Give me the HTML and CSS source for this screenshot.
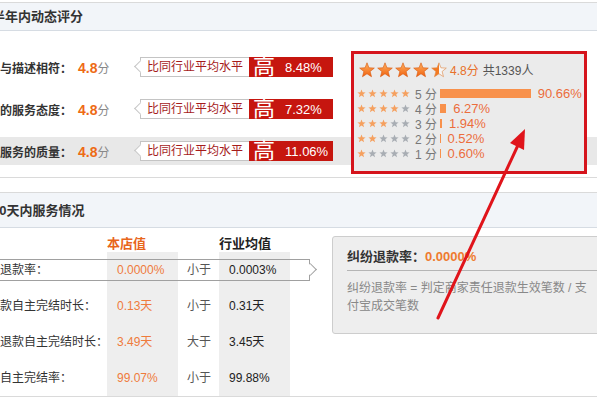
FILE: index.html
```html
<!DOCTYPE html>
<html lang="zh-CN">
<head>
    <meta charset="UTF-8">
    <title>店铺评分</title>
    <link rel="stylesheet" href="styles.css">
</head>
<body>
    <svg class="svg-defs" aria-hidden="true">
        <defs>
            <linearGradient id="g-star" x1="0" y1="0" x2="0" y2="1">
                <stop offset="0" stop-color="#ffb463"/>
                <stop offset="1" stop-color="#f0600e"/>
            </linearGradient>
            <linearGradient id="g-half" x1="0" y1="0" x2="1" y2="0">
                <stop offset="0.5" stop-color="#f37a22"/>
                <stop offset="0.5" stop-color="#f6f6f6"/>
            </linearGradient>
            <symbol id="star" viewBox="0 0 20 20">
                <polygon points="10,1 12.41,7.28 19.13,7.63 13.9,11.87 15.64,18.37 10,14.7 4.36,18.37 6.1,11.87 0.87,7.63 7.59,7.28"/>
            </symbol>
        </defs>
    </svg>

    <div class="page">
        <!-- 半年内动态评分 -->
        <div class="box">
            <div class="box-hd">半年内动态评分</div>
            <div class="dsr-bd">
                <div class="dsr-row">
                    <span class="dsr-name">宝贝与描述相符：</span>
                    <span class="dsr-score"><em>4.8</em>分</span>
                    <span class="compare">
                        <span class="compare-text">比同行业平均水平</span>
                        <span class="compare-val"><b>高</b>8.48%</span>
                    </span>
                </div>
                <div class="dsr-row">
                    <span class="dsr-name">卖家的服务态度：</span>
                    <span class="dsr-score"><em>4.8</em>分</span>
                    <span class="compare">
                        <span class="compare-text">比同行业平均水平</span>
                        <span class="compare-val"><b>高</b>7.32%</span>
                    </span>
                </div>
                <div class="dsr-row on">
                    <span class="dsr-name">物流服务的质量：</span>
                    <span class="dsr-score"><em>4.8</em>分</span>
                    <span class="compare">
                        <span class="compare-text">比同行业平均水平</span>
                        <span class="compare-val"><b>高</b>11.06%</span>
                    </span>
                </div>

                <div class="rate-panel">
                    <div class="rate-total">
                        <svg class="star-lg"><use href="#star"/></svg>
                        <svg class="star-lg"><use href="#star"/></svg>
                        <svg class="star-lg"><use href="#star"/></svg>
                        <svg class="star-lg"><use href="#star"/></svg>
                        <svg class="star-lg half"><use href="#star"/></svg>
                        <span class="rate-score">4.8分</span>
                        <span class="rate-count">共1339人</span>
                    </div>
                    <div class="rate-row">
                        <span class="stars-sm">
                            <svg class="star-sm"><use href="#star"/></svg><svg class="star-sm"><use href="#star"/></svg><svg class="star-sm"><use href="#star"/></svg><svg class="star-sm"><use href="#star"/></svg><svg class="star-sm"><use href="#star"/></svg>
                        </span>
                        <span class="rate-label">5 分</span>
                        <span class="rate-bar" style="width: 90.66px"></span>
                        <span class="rate-pct">90.66%</span>
                    </div>
                    <div class="rate-row">
                        <span class="stars-sm">
                            <svg class="star-sm"><use href="#star"/></svg><svg class="star-sm"><use href="#star"/></svg><svg class="star-sm"><use href="#star"/></svg><svg class="star-sm"><use href="#star"/></svg><svg class="star-sm off"><use href="#star"/></svg>
                        </span>
                        <span class="rate-label">4 分</span>
                        <span class="rate-bar" style="width: 6.27px"></span>
                        <span class="rate-pct">6.27%</span>
                    </div>
                    <div class="rate-row">
                        <span class="stars-sm">
                            <svg class="star-sm"><use href="#star"/></svg><svg class="star-sm"><use href="#star"/></svg><svg class="star-sm"><use href="#star"/></svg><svg class="star-sm off"><use href="#star"/></svg><svg class="star-sm off"><use href="#star"/></svg>
                        </span>
                        <span class="rate-label">3 分</span>
                        <span class="rate-bar" style="width: 1.94px"></span>
                        <span class="rate-pct">1.94%</span>
                    </div>
                    <div class="rate-row">
                        <span class="stars-sm">
                            <svg class="star-sm"><use href="#star"/></svg><svg class="star-sm"><use href="#star"/></svg><svg class="star-sm off"><use href="#star"/></svg><svg class="star-sm off"><use href="#star"/></svg><svg class="star-sm off"><use href="#star"/></svg>
                        </span>
                        <span class="rate-label">2 分</span>
                        <span class="rate-bar" style="width: 0.52px"></span>
                        <span class="rate-pct">0.52%</span>
                    </div>
                    <div class="rate-row">
                        <span class="stars-sm">
                            <svg class="star-sm"><use href="#star"/></svg><svg class="star-sm off"><use href="#star"/></svg><svg class="star-sm off"><use href="#star"/></svg><svg class="star-sm off"><use href="#star"/></svg><svg class="star-sm off"><use href="#star"/></svg>
                        </span>
                        <span class="rate-label">1 分</span>
                        <span class="rate-bar" style="width: 0.60px"></span>
                        <span class="rate-pct">0.60%</span>
                    </div>
                </div>
            </div>
        </div>

        <!-- 30天内服务情况 -->
        <div class="box box-service">
            <div class="box-hd">30天内服务情况</div>
            <div class="svc-bd">
                <div class="svc-table">
                    <div class="svc-head">
                        <span></span>
                        <span class="col-shop">本店值</span>
                        <span></span>
                        <span class="col-avg">行业均值</span>
                        <span></span>
                    </div>
                    <div class="svc-row active">
                        <span class="svc-name">纠纷退款率：</span>
                        <span class="svc-val shop">0.0000%</span>
                        <span class="svc-cmp">小于</span>
                        <span class="svc-val">0.0003%</span>
                        <span></span>
                    </div>
                    <div class="svc-row">
                        <span class="svc-name">仅退款自主完结时长：</span>
                        <span class="svc-val shop">0.13天</span>
                        <span class="svc-cmp">小于</span>
                        <span class="svc-val">0.31天</span>
                        <span></span>
                    </div>
                    <div class="svc-row">
                        <span class="svc-name">退货退款自主完结时长：</span>
                        <span class="svc-val shop">3.49天</span>
                        <span class="svc-cmp">大于</span>
                        <span class="svc-val">3.45天</span>
                        <span></span>
                    </div>
                    <div class="svc-row">
                        <span class="svc-name">退款自主完结率：</span>
                        <span class="svc-val shop">99.07%</span>
                        <span class="svc-cmp">小于</span>
                        <span class="svc-val">99.88%</span>
                        <span></span>
                    </div>
                </div>

                <div class="svc-tip">
                    <div class="tip-title">纠纷退款率：<em>0.0000%</em></div>
                    <div class="tip-desc">纠纷退款率 = 判定商家责任退款生效笔数 / 支付宝成交笔数</div>
                </div>
            </div>
        </div>
    </div>

    <!-- annotation arrow -->
    <svg class="mark-arrow" viewBox="0 0 597 397">
        <line x1="438" y1="318" x2="519" y2="143" stroke="#e0141b" stroke-width="3" stroke-linecap="round"/>
        <polygon points="525,129 524,150 510,143" fill="#e0141b"/>
    </svg>
</body>
</html>
```

FILE: styles.css
```css
body {
    margin: 0;
    width: 597px;
    height: 397px;
    overflow: hidden;
    background: #fff;
    font-family: "Liberation Sans", "Noto Sans CJK SC", sans-serif;
    font-size: 12px;
    color: #333;
}
.svg-defs {
    position: absolute;
    width: 0;
    height: 0;
}
.page {
    width: 660px;
    margin-left: -24px;
    padding-top: 2px;
}
.box {
    border-top: 1px solid #dadada;
    border-bottom: 1px solid #dadada;
}
.box-hd {
    height: 27px;
    line-height: 27px;
    padding-left: 16px;
    background: #f2f5f9;
    border-bottom: 1px solid #d6dce3;
    font-size: 13px;
    font-weight: bold;
    color: #333;
}
.box-service {
    margin-top: 14px;
}
.box-service .box-hd {
    height: 34px;
    line-height: 36px;
}

/* dsr rows */
.dsr-bd {
    position: relative;
    padding: 22px 0 12px;
}
.dsr-row {
    display: flex;
    align-items: center;
    height: 28px;
    margin-top: 14px;
}
.dsr-row:first-child {
    margin-top: 0;
}
.dsr-row.on {
    background: #e8e8e8;
}
.dsr-name {
    width: 96px;
    font-weight: bold;
    white-space: nowrap;
}
.dsr-score {
    width: 57px;
    padding-left: 6px;
    color: #888;
}
.dsr-score em {
    font-style: normal;
    font-weight: bold;
    font-size: 14px;
    color: #ee6a14;
}
.compare {
    display: flex;
    height: 20px;
}
.compare-text {
    position: relative;
    box-sizing: border-box;
    height: 20px;
    margin-left: 5px;
    padding: 0 6px;
    line-height: 18px;
    background: #fff;
    border: 1px solid #c4c4c4;
    border-right: none;
    color: #a51b1b;
}
.compare-text::before {
    content: "";
    position: absolute;
    left: -5px;
    top: 4px;
    width: 8px;
    height: 8px;
    background: #fff;
    border-left: 1px solid #c4c4c4;
    border-bottom: 1px solid #c4c4c4;
    transform: rotate(45deg);
}
.compare-val {
    display: flex;
    align-items: center;
    width: 84px;
    box-sizing: border-box;
    padding-left: 4px;
    background: #c6160f;
    color: #fff;
    font-size: 13px;
}
.compare-val b {
    font-weight: normal;
    font-size: 22px;
    line-height: 20px;
    margin-right: 10px;
}

/* rating panel */
.rate-panel {
    position: absolute;
    left: 375px;
    top: 20px;
    width: 236px;
    height: 123px;
    box-sizing: border-box;
    padding: 8px 0 0 5px;
    background: #ebebeb;
    border: 3px solid #d5141c;
}
.rate-total {
    display: flex;
    align-items: flex-end;
    height: 16px;
}
.star-lg {
    width: 16px;
    height: 16px;
    margin-right: 2px;
    fill: url(#g-star);
    stroke: #d95a10;
    stroke-width: 0.8;
}
.star-lg.half {
    fill: url(#g-half);
    stroke: #e08a4a;
}
.rate-score {
    margin-left: 1px;
    line-height: 14px;
    color: #e8702a;
}
.rate-count {
    margin-left: 4px;
    line-height: 14px;
    color: #555;
}
.rate-row {
    display: flex;
    align-items: center;
    height: 15px;
    margin-left: -2px;
}
.rate-total + .rate-row {
    margin-top: 8px;
}
.stars-sm {
    display: flex;
    width: 55px;
}
.star-sm {
    width: 9px;
    height: 9px;
    margin-right: 2px;
    fill: #f5a05f;
}
.star-sm.off {
    fill: #a8adb3;
}
.rate-label {
    width: 25px;
    margin-left: 3px;
    color: #777;
    white-space: nowrap;
}
.rate-bar {
    height: 9px;
    margin-right: 7px;
    background: #f8914b;
}
.rate-pct {
    font-size: 13px;
    color: #ec6d3c;
}

/* service table */
.svc-bd {
    display: flex;
    align-items: flex-start;
}
.svc-table {
    flex: none;
    width: 339px;
}
.svc-head,
.svc-row {
    display: grid;
    grid-template-columns: 131px 71px 41px 71px 25px;
}
.svc-head {
    padding-top: 8px;
    line-height: 16px;
    font-size: 13px;
    font-weight: bold;
}
.col-shop {
    color: #e8661c;
}
.col-avg {
    color: #222;
}
.svc-row {
    position: relative;
    height: 36px;
    line-height: 36px;
}
.svc-name {
    white-space: nowrap;
    color: #333;
}
.svc-val {
    padding-left: 10px;
    background: #eeeeee;
    color: #222;
}
.svc-val.shop {
    color: #ef7b3c;
}
.svc-cmp {
    padding-left: 9px;
    color: #555;
}
.svc-row.active::before {
    content: "";
    position: absolute;
    top: 7px;
    bottom: 7px;
    left: 0;
    right: 5px;
    border: 1px solid #a0a0a0;
}
.svc-row.active::after {
    content: "";
    position: absolute;
    top: 50%;
    right: 0;
    width: 9px;
    height: 9px;
    margin-top: -5px;
    box-sizing: border-box;
    background: #fff;
    border-top: 1px solid #a0a0a0;
    border-right: 1px solid #a0a0a0;
    transform: rotate(45deg);
}
.svc-tip {
    flex: none;
    width: 260px;
    margin: 8px 0 0 17px;
    padding: 10px 20px 18px 14px;
    background: #eeeeee;
    border: 1px solid #cdcdcd;
    border-radius: 3px;
}
.tip-title {
    padding-bottom: 3px;
    line-height: 20px;
    font-size: 13px;
    font-weight: bold;
    color: #333;
    border-bottom: 1px solid #b5b5b5;
}
.tip-title em {
    font-style: normal;
    color: #ef7b2f;
}
.tip-desc {
    width: 250px;
    margin-top: 8px;
    line-height: 18px;
    font-size: 12px;
    color: #888;
}

.mark-arrow {
    position: absolute;
    top: 0;
    left: 0;
    width: 597px;
    height: 397px;
    pointer-events: none;
}
```
